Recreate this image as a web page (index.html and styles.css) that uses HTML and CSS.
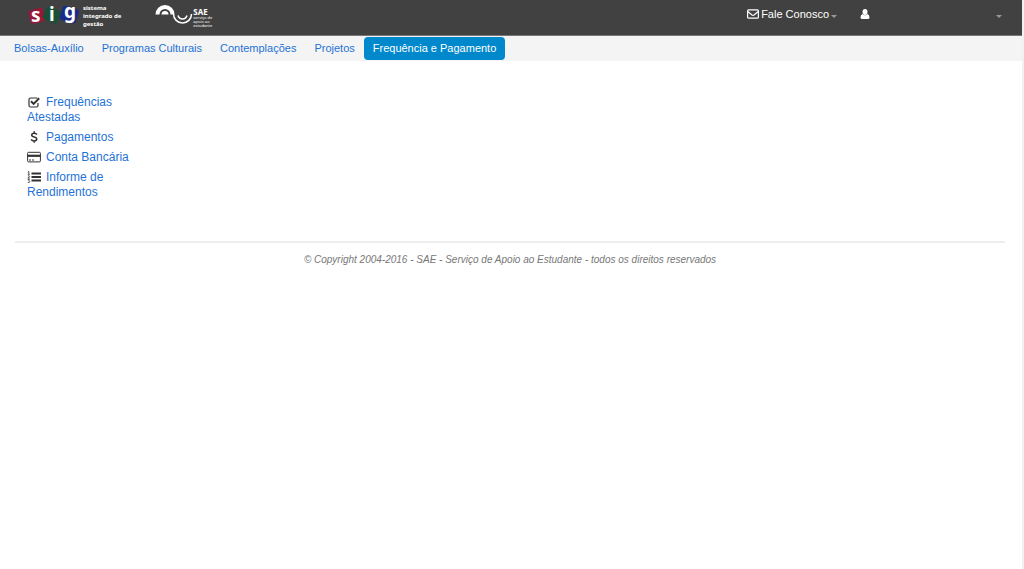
FILE: index.html
```html
<!DOCTYPE html>
<html lang="pt-BR">
<head>
<meta charset="utf-8">
<meta name="viewport" content="width=device-width, initial-scale=1">
<title>SAE - Sistema Integrado de Gestão</title>
<link rel="stylesheet" href="styles.css">
</head>
<body>
<header class="topbar">
  <a class="brand brand-sig" href="#" aria-label="SIG">
    <svg class="sig-shapes" viewBox="0 0 52 26" aria-hidden="true">
      <rect x="2" y="5" width="15" height="14" rx="3" fill="#96183a" transform="rotate(-14 9 11)"/>
      <rect x="17" y="4" width="16" height="14" rx="3" fill="#1a5038" transform="rotate(24 25 11)"/>
      <rect x="34" y="3" width="17" height="15" rx="3" fill="#1b2c88" transform="rotate(16 42 10)"/>
      <g class="sig-letters">
        <text x="4" y="18">s</text>
        <text x="22" y="17">i</text>
        <text x="37" y="14">g</text>
      </g>
    </svg>
    <span class="sig-name">sistema<br>integrado de<br>gestão</span>
  </a>
  <a class="brand brand-sae" href="#">
    <svg class="sae-wave" viewBox="0 0 38 22" aria-hidden="true">
      <g fill="none" stroke="#fff">
        <path d="M2.500 10.500a7.500 7.500 0 0 1 15 0" stroke-width="4"/>
        <path d="M18.500 10a9 9 0 0 0 18 0" stroke-width="1.500"/>
        <path d="M23 11.500c1.500 4.500 7.500 4.500 9 0" stroke-width="1.500"/>
      </g>
      <path d="M6.500 10.500a3.500 3.500 0 0 1 7 0z" fill="#fff"/>
    </svg>
    <span class="sae-text"><strong>SAE</strong><span>serviço de<br>apoio ao<br>estudante</span></span>
  </a>
  <div class="tools">
    <button class="tool contact" type="button">
      <svg class="mail" viewBox="0 0 12 10" fill="none" stroke="#fff" stroke-width="1.200" aria-hidden="true"><rect x=".6" y=".8" width="10.800" height="8.400" rx="1"/><path d="M.8 2.500 5 6q1 .7 2 0l4.200-3.500"/></svg>
      Fale Conosco<span class="caret"></span>
    </button>
    <button class="tool user" type="button" aria-label="Usuário">
      <svg class="person" viewBox="0 0 10 10" fill="#fff" aria-hidden="true"><ellipse cx="5" cy="3" rx="2.500" ry="3"/><path d="M2.500 5Q5 7.500 7.500 5 9.500 5.500 9.500 8.500 9.500 10 8 10H2Q.5 10 .5 8.500.5 5.500 2.500 5z"/></svg>
      <span class="caret"></span>
    </button>
  </div>
</header>
<nav class="menu">
  <a href="#">Bolsas-Auxílio</a>
  <a href="#">Programas Culturais</a>
  <a href="#">Contemplações</a>
  <a href="#">Projetos</a>
  <a class="active" href="#" aria-current="page">Frequência e Pagamento</a>
</nav>
<main class="content">
  <ul class="side">
    <li><svg class="icon" viewBox="0 0 14 12" fill="none" stroke="#333" aria-hidden="true"><path d="M11 7v2.500q0 1.500-1.500 1.500h-6Q2 11 2 9.500v-6Q2 2 3.500 2h6l1 .3" stroke-width="1.200"/><path d="m4 5.300 2.600 2.600 5.600-5.600" stroke-width="2"/></svg><a href="#">Frequências Atestadas</a></li>
    <li><svg class="icon" viewBox="0 0 14 12" fill="none" stroke="#333" aria-hidden="true"><path d="M10 3.500Q9 2.200 7.200 2.200 4.700 2.200 4.700 4q0 1.500 2.500 2t2.500 2q0 1.900-2.500 1.900Q5.200 9.900 4 8.500M7.200.3v2M7.200 9.800v2" stroke-width="1.500"/></svg><a href="#">Pagamentos</a></li>
    <li><svg class="icon" viewBox="0 0 14 12" fill="none" stroke="#333" aria-hidden="true"><rect x=".6" y="1.300" width="12.800" height="9.600" rx="1"/><path d="M.6 4.800h12.800" stroke-width="2.200"/><path d="M2 9h2m1 0h2"/></svg><a href="#">Conta Bancária</a></li>
    <li><svg class="icon" viewBox="0 0 14 12" fill="none" stroke="#333" aria-hidden="true"><path d="M4.500 2.500H14M4.500 6H14M4.500 9.500H14" stroke-width="1.800"/><path d="m.8 1 1-.7v3M.8 3.300h2M.8 5q1.700-.8 1.700.2T.8 7.100h2M.8 8.500h1.700L1.600 9.700q1.200 0 1.200 1T.8 11.500" stroke-width=".8"/></svg><a href="#">Informe de Rendimentos</a></li>
  </ul>
</main>
<footer class="footer">© Copyright 2004-2016 - SAE - Serviço de Apoio ao Estudante - todos os direitos reservados</footer>
</body>
</html>
```
FILE: styles.css
```css
* { box-sizing: border-box; }
html { min-height: 100%; background: #fff; }
body {
  margin: 0;
  min-height: 100vh;
  border-right: 2px solid #f1f1f1;
  background: #fff;
  font-family: "Liberation Sans", Arial, sans-serif;
  font-size: 11px;
}
a { color: #1f72d6; text-decoration: none; }
.topbar {
  display: flex;
  align-items: flex-start;
  height: 36px;
  padding: 4px 20px 0 27px;
  background: #414141;
  border-bottom: 1px solid #777;
}
.brand { display: flex; color: #fff; }
.sig-shapes { width: 52px; height: 26px; overflow: visible; }
.sig-letters { fill: #fff; font: bold 19px/26px "Noto Sans", sans-serif; }
.sig-name { margin-left: 4px; font: bold 6px/8px "Noto Sans", sans-serif; }
.brand-sae { margin-left: 34px; }
.sae-wave { width: 38px; height: 22px; }
.sae-text { padding-top: 3px; font: 4px/4px "Noto Sans", sans-serif; }
.sae-text strong { display: block; font-size: 8px; line-height: 9px; }
.sae-text span { display: block; }
.tools { display: flex; flex: 1; justify-content: flex-end; }
.tool {
  display: flex;
  align-items: center;
  height: 20px;
  padding: 0;
  border: 0;
  background: none;
  color: #fff;
  font: 11px "Liberation Sans", Arial, sans-serif;
}
.mail { width: 12px; height: 10px; margin-right: 2px; }
.person { width: 10px; height: 10px; }
.user { justify-content: space-between; width: 142px; margin-left: 23px; }
.caret {
  margin: 4px 0 0 2px;
  border: 3px solid transparent;
  border-top-color: #999;
  border-bottom: 0;
}
.menu {
  display: flex;
  align-items: center;
  height: 25px;
  padding: 0 5px;
  background: #f4f4f4;
}
.menu a { padding: 0 9px; line-height: 23px; border-radius: 4px; }
.menu .active { background: #0088cc; color: #fff; }
.content { padding: 34px 27px 0; }
.side {
  width: 110px;
  margin: 0;
  padding: 0;
  list-style: none;
  font-size: 12px;
  line-height: 15px;
}
.side li { margin-bottom: 5px; }
.icon { width: 14px; height: 12px; margin: 0 5px 0 0; vertical-align: -2px; }
.footer {
  margin: 41px 17px 0 15px;
  padding-top: 9px;
  border-top: 2px solid #eee;
  color: #777;
  font-size: 10px;
  font-style: italic;
  line-height: 15px;
  text-align: center;
}
```
